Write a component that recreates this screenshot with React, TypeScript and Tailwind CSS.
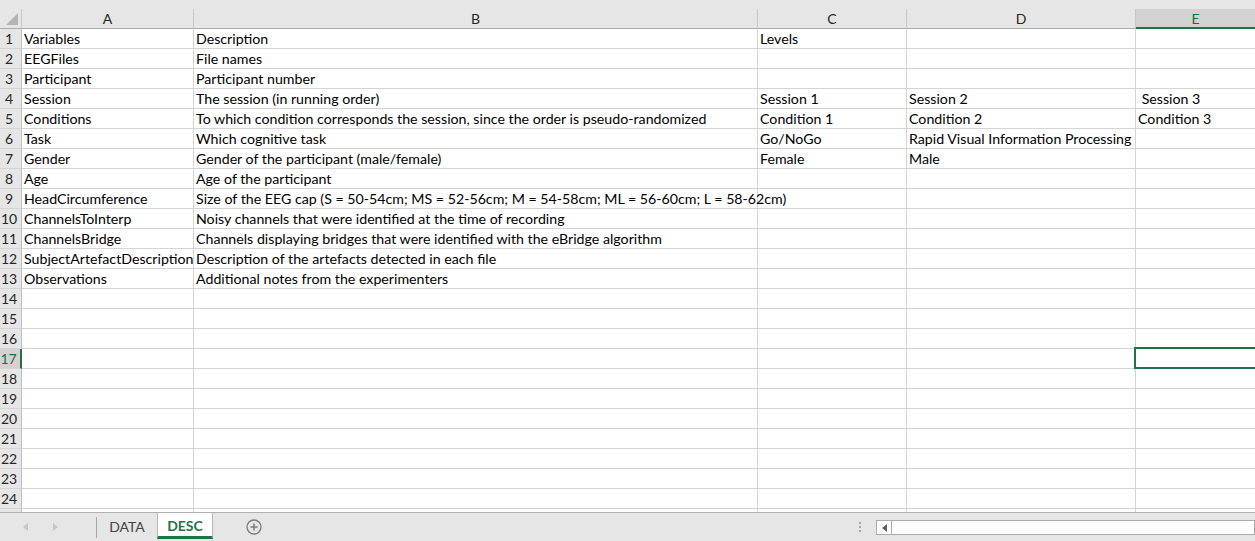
import React from "react";

const rows: string[][] = [
  ["Variables", "Description", "Levels", "", ""],
  ["EEGFiles", "File names", "", "", ""],
  ["Participant", "Participant number", "", "", ""],
  ["Session", "The session (in running order)", "Session 1", "Session 2", " Session 3"],
  ["Conditions", "To which condition corresponds the session, since the order is pseudo-randomized", "Condition 1", "Condition 2", "Condition 3"],
  ["Task", "Which cognitive task", "Go/NoGo", "Rapid Visual Information Processing", ""],
  ["Gender", "Gender of the participant (male/female)", "Female", "Male", ""],
  ["Age", "Age of the participant", "", "", ""],
  ["HeadCircumference", "Size of the EEG cap (S = 50-54cm; MS = 52-56cm; M = 54-58cm; ML = 56-60cm; L = 58-62cm)", "", "", ""],
  ["ChannelsToInterp", "Noisy channels that were identified at the time of recording", "", "", ""],
  ["ChannelsBridge", "Channels displaying bridges that were identified with the eBridge algorithm", "", "", ""],
  ["SubjectArtefactDescription", "Description of the artefacts detected in each file", "", "", ""],
  ["Observations", "Additional notes from the experimenters", "", "", ""],
];

const colWidths = ["w-[172px]", "w-[564px]", "w-[149px]", "w-[229px]"];
const letters = ["A", "B", "C", "D"];

const font = { fontFamily: "Lato, 'Liberation Sans', sans-serif" };

function Corner() {
  return (
    <div className="w-[22px] h-[20px] shrink-0 border-r border-[#c6c6c6] border-b border-b-[#ababab] flex items-end justify-end pr-[3px] pb-[3px]">
      <svg width="12" height="12" viewBox="0 0 12 12">
        <polygon points="12,0 12,12 0,12" fill="#b4b4b4" />
      </svg>
    </div>
  );
}

function HeaderRow() {
  return (
    <div className="flex shrink-0 bg-[#e6e6e6] pt-[9px] text-[14px] text-[#262626]">
      <Corner />
      {letters.map((l, i) => (
        <div
          key={l}
          className={`${colWidths[i]} h-[20px] shrink-0 border-r border-[#c6c6c6] border-b border-b-[#ababab] flex items-center justify-center leading-none`}
        >
          {l}
        </div>
      ))}
      <div className="flex-1 h-[20px] bg-[#d2d2d2] border-b-2 border-[#217346] text-[#1e6b41] flex items-center justify-center leading-none pt-[1px]">
        E
      </div>
    </div>
  );
}

function Row({ n, cells }: { n: number; cells: string[] }) {
  const sel = n === 17;
  return (
    <div className="flex h-[20px] shrink-0">
      <div
        className={`w-[22px] shrink-0 border-b border-[#d4d4d4] flex items-center justify-center pr-[3px] leading-none text-[14px] ${
          sel ? "bg-[#d2d2d2] text-[#217346] border-r-2 border-r-[#217346]" : "bg-[#e6e6e6] text-[#262626] border-r border-r-[#c0c0c0]"
        }`}
      >
        {n < 25 ? n : ""}
      </div>
      {colWidths.map((w, i) => {
        // like Excel, text runs on into the next cell when that cell is empty
        const spill = cells[i + 1] === "";
        return (
          <div
            key={i}
            className={`${w} shrink-0 border-r border-b border-[#d4d4d4] pl-[2px] pt-[1px] flex items-center whitespace-pre text-[14.2px] text-black leading-none ${
              spill ? "overflow-visible" : "overflow-hidden"
            }`}
          >
            {cells[i]}
          </div>
        );
      })}
      <div className="relative flex-1 min-w-0 border-b border-[#d4d4d4] pl-[2px] pt-[1px] flex items-center whitespace-pre text-[14.2px] text-black leading-none">
        {cells[4]}
        {sel && <div className="absolute left-[-2px] top-[-2px] right-[-4px] h-[22px] border-2 border-[#217346]" />}
      </div>
    </div>
  );
}

function SheetGrid() {
  const all: string[][] = [];
  for (let i = 0; i < 25; i++) all.push(rows[i] ?? ["", "", "", "", ""]);
  return (
    <div className="flex-1 min-h-0 overflow-hidden bg-white flex flex-col">
      {all.map((c, i) => (
        <Row key={i} n={i + 1} cells={c} />
      ))}
    </div>
  );
}

function TabBar() {
  return (
    <div className="h-[29px] shrink-0 border-t border-[#b1b1b1] bg-[#e6e6e6] flex">
      <div className="w-[855px] shrink-0 flex items-start">
        <div className="w-[96px] h-[28px] flex items-center pl-[23px] gap-[25px]">
          <svg width="5" height="8" viewBox="0 0 5 8">
            <polygon points="5,0 5,8 0,4" fill="#c6c6c6" />
          </svg>
          <svg width="5" height="8" viewBox="0 0 5 8">
            <polygon points="0,0 0,8 5,4" fill="#c6c6c6" />
          </svg>
        </div>
        <div className="w-px h-[21px] mt-[4px] bg-[#a6a6a6]" />
        <div className="w-[60px] h-[26px] flex items-center justify-center text-[14px] text-[#444444] pt-[1px]">DATA</div>
        <div className="w-[56px] h-[26px] bg-white border-x border-[#b8b8b8] border-b-[3px] border-b-[#217346] flex items-center justify-center text-[14px] font-bold text-[#217346] pt-[2px]">
          DESC
        </div>
        <div className="ml-[33px] h-[28px] flex items-center">
          <svg width="16" height="16" viewBox="0 0 16 16">
            <circle cx="8" cy="8" r="7" fill="none" stroke="#7a7a7a" strokeWidth="1.3" />
            <path d="M8 4.5v7M4.5 8h7" stroke="#7a7a7a" strokeWidth="1.5" />
          </svg>
        </div>
      </div>
      <div className="flex-1 min-w-0 flex items-start">
        <div className="ml-[4px] mt-[9px] flex flex-col gap-[2px]">
          <div className="w-[2px] h-[2px] bg-[#a6a6a6]" />
          <div className="w-[2px] h-[2px] bg-[#a6a6a6]" />
          <div className="w-[2px] h-[2px] bg-[#a6a6a6]" />
        </div>
        <div className="ml-[15px] mt-[7px] flex-1 h-[15px] border border-[#ababab] bg-white flex">
          <div className="w-[15px] h-full border-r border-[#ababab] flex items-center justify-center">
            <svg width="5" height="8" viewBox="0 0 5 8">
              <polygon points="5,0 5,8 0,4" fill="#606060" />
            </svg>
          </div>
        </div>
      </div>
    </div>
  );
}

export default function App() {
  return (
    <div className="h-[541px] w-[1255px] overflow-hidden flex flex-col bg-white" style={font}>
      <HeaderRow />
      <SheetGrid />
      <TabBar />
    </div>
  );
}
